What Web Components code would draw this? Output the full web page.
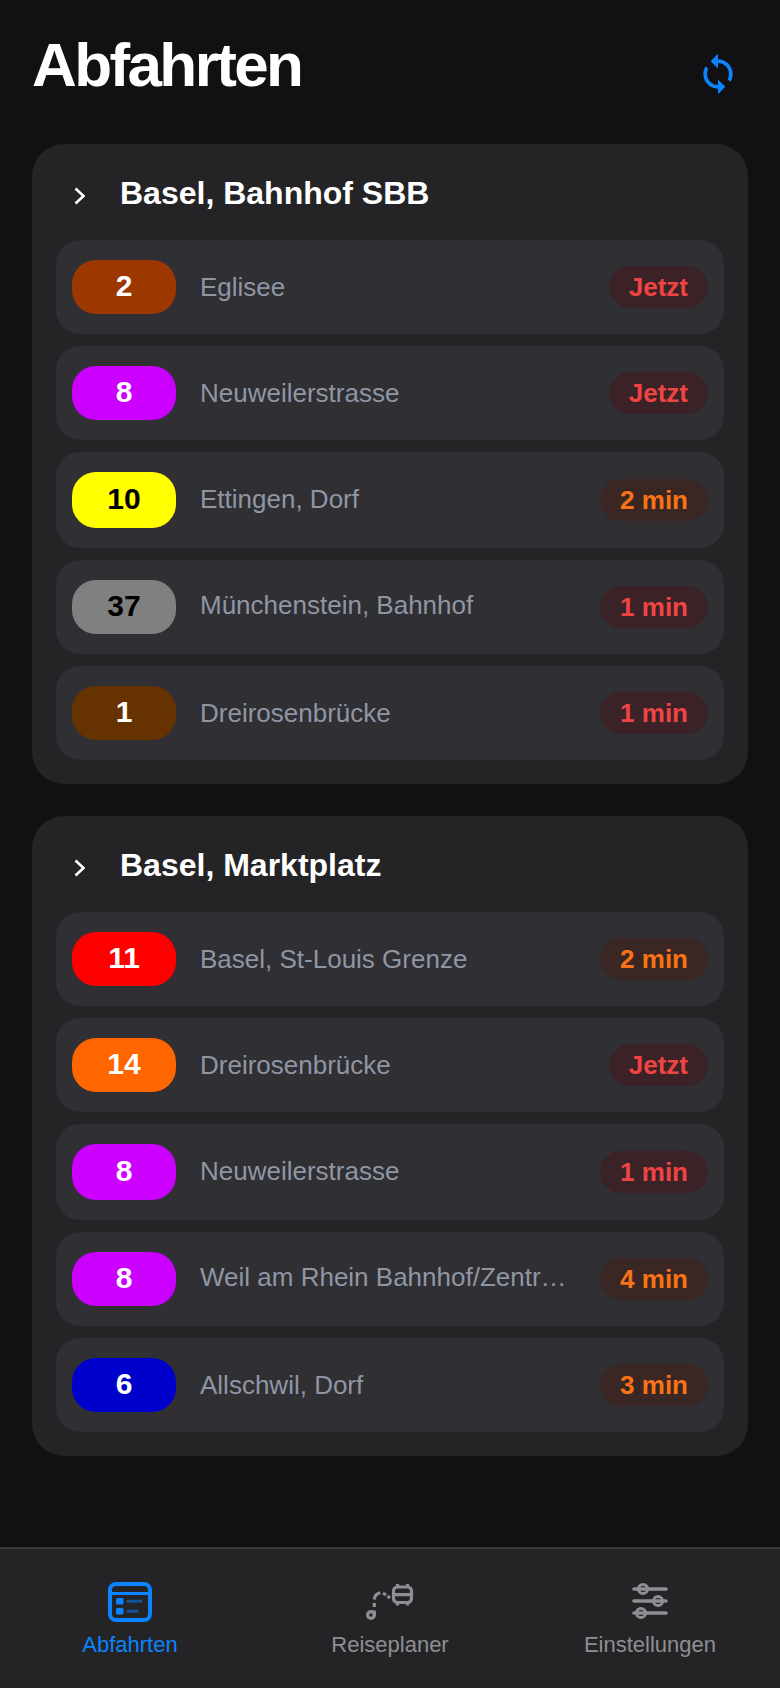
<!DOCTYPE html>
<html lang="de">
<head>
<meta charset="utf-8">
<title>Abfahrten</title>
<style>
  html, body { margin: 0; height: 100%; }
  body {
    background: #111113;
    color: #fff;
    font-family: "Liberation Sans", Arial, sans-serif;
    display: flex;
    flex-direction: column;
    height: 1688px;
    overflow: hidden;
  }
  main { flex: 1; padding: 0 32px; display: flex; flex-direction: column; gap: 32px; }
</style>
</head>
<body>
<page-header>Abfahrten</page-header>
<main>
  <stop-card name="Basel, Bahnhof SBB">
    <departure-row line="2" color="#9c3700" dest="Eglisee" time="Jetzt" level="now"></departure-row>
    <departure-row line="8" color="#cc00ff" dest="Neuweilerstrasse" time="Jetzt" level="now"></departure-row>
    <departure-row line="10" color="#ffff00" ink="#000" tall dest="Ettingen, Dorf" time="2 min" level="soon"></departure-row>
    <departure-row line="37" color="#808080" ink="#000" raised dest="Münchenstein, Bahnhof" time="1 min" level="now"></departure-row>
    <departure-row line="1" color="#663300" dest="Dreirosenbrücke" time="1 min" level="now"></departure-row>
  </stop-card>
  <stop-card name="Basel, Marktplatz">
    <departure-row line="11" color="#ff0000" dest="Basel, St-Louis Grenze" time="2 min" level="soon"></departure-row>
    <departure-row line="14" color="#ff6600" dest="Dreirosenbrücke" time="Jetzt" level="now"></departure-row>
    <departure-row line="8" color="#cc00ff" tall dest="Neuweilerstrasse" time="1 min" level="now"></departure-row>
    <departure-row line="8" color="#cc00ff" raised dest="Weil am Rhein Bahnhof/Zentrum" time="4 min" level="soon"></departure-row>
    <departure-row line="6" color="#0000cc" dest="Allschwil, Dorf" time="3 min" level="soon"></departure-row>
  </stop-card>
</main>
<tab-bar>
  <tab-item label="Abfahrten" icon="board" active></tab-item>
  <tab-item label="Reiseplaner" icon="route"></tab-item>
  <tab-item label="Einstellungen" icon="sliders"></tab-item>
</tab-bar>

<script>
class PageHeader extends HTMLElement {
  constructor() {
    super();
    this.attachShadow({ mode: 'open' });
    this.shadowRoot.innerHTML = /* html */ `
    <style>
      :host {
        display: flex;
        justify-content: space-between;
        height: 144px;
        box-sizing: border-box;
        padding: 28px 40px 0 32px;
      }
      h1 {
        margin: 0;
        font-size: 62px;
        line-height: 74px;
        font-weight: 700;
        letter-spacing: -2.6px;
      }
      svg { display: block; width: 44px; height: 44px; margin-top: 24px; fill: #0a84ff; }
    </style>
    <h1><slot></slot></h1>
    <svg viewBox="0 0 24 24"><path d="M12 4V1L8 5l4 4V6c3.31 0 6 2.69 6 6 0 1.01-.25 1.97-.7 2.8l1.46 1.46C19.54 15.03 20 13.57 20 12c0-4.42-3.58-8-8-8zm0 14c-3.31 0-6-2.69-6-6 0-1.01.25-1.97.7-2.8L5.24 7.74C4.46 8.97 4 10.43 4 12c0 4.42 3.58 8 8 8v3l4-4-4-4v3z"/></svg>
    `;
  }
}

class StopCard extends HTMLElement {
  constructor() {
    super();
    this.attachShadow({ mode: 'open' });
    this.shadowRoot.innerHTML = /* html */ `
    <style>
      :host {
        display: block;
        background: #242426;
        border-radius: 32px;
        padding: 24px;
      }
      header {
        display: flex;
        align-items: center;
        height: 72px;
        box-sizing: border-box;
        padding-bottom: 16px;
      }
      svg { width: 32px; height: 32px; margin-left: 8px; flex: none; }
      h2 {
        margin: 0 0 0 24px;
        font-size: 32px;
        line-height: 40px;
        font-weight: 700;
        position: relative;
        top: -3px;
      }
      .rows { display: flex; flex-direction: column; gap: 12px; }
    </style>
    <header>
      <svg viewBox="0 0 32 32"><path d="M11.5 8.5l8 7.5-8 7.5" fill="none" stroke="#fff" stroke-width="2.6"/></svg>
      <h2></h2>
    </header>
    <div class="rows"><slot></slot></div>
    `;
    this.shadowRoot.querySelector('h2').textContent = this.getAttribute('name');
  }
}

class DepartureRow extends HTMLElement {
  constructor() {
    super();
    this.attachShadow({ mode: 'open' });
    this.shadowRoot.innerHTML = /* html */ `
    <style>
      :host {
        display: flex;
        align-items: center;
        gap: 24px;
        background: #2f2f34;
        border-radius: 24px;
        padding: 20px 16px;
      }
      .line {
        flex: none;
        width: 104px;
        height: 54px;
        border-radius: 24px;
        display: flex;
        align-items: center;
        justify-content: center;
        font-size: 30px;
        font-weight: 700;
        padding-bottom: 3px;
        box-sizing: border-box;
      }
      :host([tall]) .line { height: 56px; }
      .dest {
        flex: 1;
        min-width: 0;
        font-size: 26px;
        line-height: 30px;
        color: #8f96a3;
        white-space: nowrap;
        overflow: hidden;
        text-overflow: ellipsis;
      }
      :host([tall]) .dest { padding-bottom: 2px; }
      :host([raised]) .dest { padding-bottom: 4px; }
      .time {
        flex: none;
        height: 42px;
        line-height: 42px;
        padding: 0 20px;
        border-radius: 21px;
        font-size: 26px;
        font-weight: 700;
      }
      .time.now { color: #ef4444; background: #3b2226; }
      .time.soon { color: #f97316; background: #3a2623; }
    </style>
    <div class="line"></div>
    <div class="dest"></div>
    <div class="time"></div>
    `;
    const line = this.shadowRoot.querySelector('.line');
    line.textContent = this.getAttribute('line');
    line.style.background = this.getAttribute('color');
    line.style.color = this.getAttribute('ink') || '#fff';
    this.shadowRoot.querySelector('.dest').textContent = this.getAttribute('dest');
    const time = this.shadowRoot.querySelector('.time');
    time.textContent = this.getAttribute('time');
    time.classList.add(this.getAttribute('level'));
  }
}

class TabBar extends HTMLElement {
  constructor() {
    super();
    this.attachShadow({ mode: 'open' });
    this.shadowRoot.innerHTML = /* html */ `
    <style>
      :host {
        display: grid;
        grid-template-columns: repeat(3, 1fr);
        height: 141px;
        box-sizing: border-box;
        padding-top: 33px;
        background: #242426;
        border-top: 2px solid #3a3a3c;
      }
    </style>
    <slot></slot>
    `;
  }
}

const TAB_ICONS = {
  board: `<svg viewBox="0 0 48 40" fill="none" stroke="currentColor">
      <rect x="4" y="2" width="40" height="36" rx="6" stroke-width="4"/>
      <path d="M4 11.5h40" stroke-width="3"/>
      <rect x="10" y="16" width="7.5" height="6.5" rx="1.5" fill="currentColor" stroke="none"/>
      <rect x="10" y="26" width="7.5" height="6.5" rx="1.5" fill="currentColor" stroke="none"/>
      <path d="M22 19.3h13M22 29.3h9" stroke-width="3" stroke-linecap="round" opacity=".5"/>
    </svg>`,
  route: `<svg viewBox="0 0 48 40" fill="none" stroke="currentColor" stroke-width="3.2">
      <circle cx="5" cy="33" r="3.4"/>
      <path d="M8.3 33v-4.5M8.3 25v-4M8.3 17.5c.3-3.5 2.5-6 6-6.7M17 11l3 2M21.5 14l2.5 2"/>
      <rect x="27.5" y="5" width="18" height="15.5" rx="4"/>
      <path d="M27.5 12.7h18M31.5 2v3M41.5 2v3M31.5 20.5v3M41.5 20.5v3"/>
    </svg>`,
  sliders: `<svg viewBox="0 0 48 40" fill="none" stroke="currentColor" stroke-width="3.6">
      <path d="M8 7h32M8 19h32M8 31h32" stroke-linecap="round"/>
      <circle cx="17" cy="7" r="4.6" stroke-width="3"/>
      <circle cx="32" cy="19" r="4.6" stroke-width="3"/>
      <circle cx="15" cy="31" r="4.6" stroke-width="3"/>
    </svg>`,
};

class TabItem extends HTMLElement {
  constructor() {
    super();
    this.attachShadow({ mode: 'open' });
    this.shadowRoot.innerHTML = /* html */ `
    <style>
      :host {
        display: flex;
        flex-direction: column;
        align-items: center;
        color: #8e8e93;
      }
      :host([active]) { color: #0a84ff; }
      svg { display: block; width: 48px; height: 40px; }
      span { font-size: 22px; line-height: 26px; margin-top: 10px; }
    </style>
    ${TAB_ICONS[this.getAttribute('icon')]}
    <span></span>
    `;
    this.shadowRoot.querySelector('span').textContent = this.getAttribute('label');
  }
}

customElements.define('page-header', PageHeader);
customElements.define('stop-card', StopCard);
customElements.define('departure-row', DepartureRow);
customElements.define('tab-bar', TabBar);
customElements.define('tab-item', TabItem);
</script>
</body>
</html>
